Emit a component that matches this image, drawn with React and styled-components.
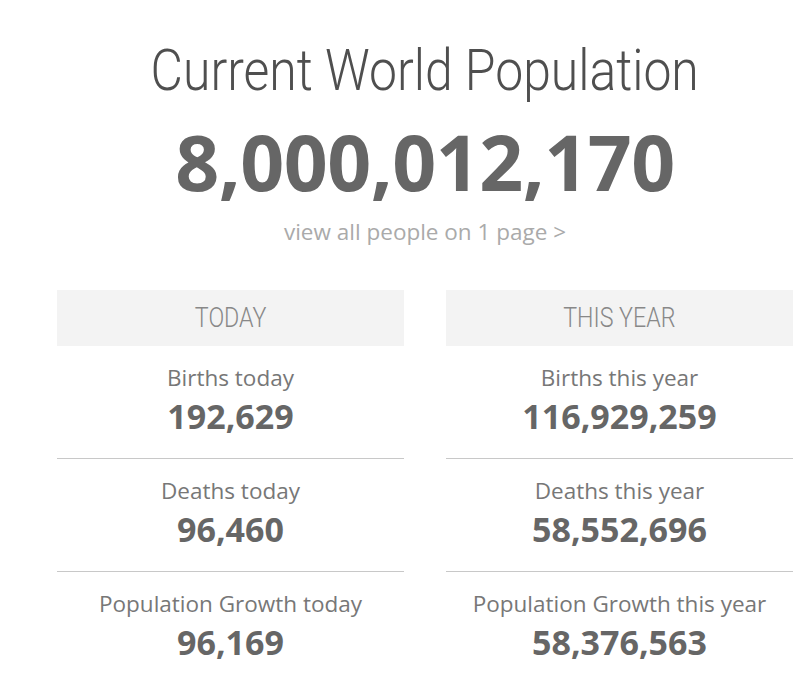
import React from 'react'
import styled, { createGlobalStyle } from 'styled-components'

const Global = createGlobalStyle`
  body {
    margin: 0;
    background: #fff;
    font-family: "Open Sans", "Liberation Sans", sans-serif;
  }
`;

const today = [
  { label: 'Births today', value: '192,629' },
  { label: 'Deaths today', value: '96,460' },
  { label: 'Population Growth today', value: '96,169' },
];

const year = [
  { label: 'Births this year', value: '116,929,259' },
  { label: 'Deaths this year', value: '58,552,696' },
  { label: 'Population Growth this year', value: '58,376,563' },
];

const Panel = ({ title, rows }) => (
  <Column>
    <Header><Condensed>{title}</Condensed></Header>
    {rows.map((r, i) => (
      <Row key={r.label} last={i === rows.length - 1}>
        <Label>{r.label}</Label>
        <Value>{r.value}</Value>
      </Row>
    ))}
  </Column>
);

const App = () => {
  return (
    <Page>
      <Global />
      <Title><Condensed>Current World Population</Condensed></Title>
      <Counter>8,000,012,170</Counter>
      <ViewAll>view all people on 1 page &gt;</ViewAll>
      <Grid>
        <Panel title="TODAY" rows={today} />
        <Panel title="THIS YEAR" rows={year} />
      </Grid>
    </Page>
  )
}

export default App;

const Page = styled.div`
  width: 736px;
  padding: 40px 7px 0 57px;
  display: flex;
  flex-direction: column;
  align-items: center;
`;

const Condensed = styled.span`
  display: inline-block;
  transform: scaleX(0.86);
  white-space: nowrap;
`;

const Title = styled.h1`
  margin: 0;
  font-family: Roboto, "Liberation Sans", sans-serif;
  font-weight: 300;
  font-size: 58px;
  line-height: 60px;
  color: #4f4f4f;
  text-align: center;
`;

const Counter = styled.div`
  margin-top: 17px;
  font-weight: 700;
  font-size: 77px;
  line-height: 90px;
  color: #666;
  letter-spacing: -0.5px;
`;

const ViewAll = styled.a`
  margin-top: 10px;
  font-size: 22.5px;
  line-height: 30px;
  color: #aaa;
  cursor: pointer;
`;

const Grid = styled.div`
  margin-top: 43px;
  width: 100%;
  display: grid;
  grid-template-columns: 1fr 1fr;
  column-gap: 42px;
`;

const Column = styled.div`
  display: flex;
  flex-direction: column;
`;

const Header = styled.div`
  height: 56px;
  line-height: 56px;
  background: #f3f3f3;
  text-align: center;
  font-family: Roboto, "Liberation Sans", sans-serif;
  font-weight: 300;
  font-size: 27px;
  color: #888;
`;

const Row = styled.div`
  padding: 18px 0 20px;
  text-align: center;
  border-bottom: 1px solid ${p => (p.last ? 'transparent' : '#c8c8c8')};
`;

const Label = styled.div`
  font-size: 22.5px;
  line-height: 28px;
  color: #777;
`;

const Value = styled.div`
  margin-top: 2px;
  font-weight: 700;
  font-size: 34px;
  line-height: 44px;
  color: #666;
`;
